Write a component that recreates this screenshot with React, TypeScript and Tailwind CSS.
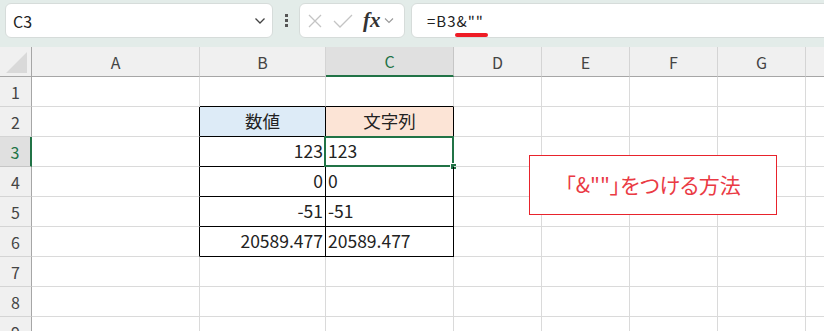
import React from 'react';

const COLS = ['A', 'B', 'C', 'D', 'E', 'F', 'G', 'H'];
const ROWS = [1, 2, 3, 4, 5, 6, 7, 8, 9];

type Cell = { text: string; align?: 'left' | 'right' | 'center'; bg?: string };

const DATA: Record<string, Cell> = {
    B2: { text: '数値', align: 'center', bg: 'bg-[#ddebf7]' },
    C2: { text: '文字列', align: 'center', bg: 'bg-[#fce4d6]' },
    B3: { text: '123', align: 'right' },
    C3: { text: '123' },
    B4: { text: '0', align: 'right' },
    C4: { text: '0' },
    B5: { text: '-51', align: 'right' },
    C5: { text: '-51' },
    B6: { text: '20589.477', align: 'right' },
    C6: { text: '20589.477' },
};

const inTable = (c: string, r: number) => (c === 'B' || c === 'C') && r >= 2 && r <= 6;

const App: React.FC = () => {
    return (
        <div
            className="w-[824px] h-[331px] overflow-hidden bg-white text-[#222]"
            style={{ fontFamily: '"Noto Sans CJK JP", "Liberation Sans", sans-serif' }}
        >
            {/* 数式バー */}
            <div className="h-[47px] bg-[#e3ece9] flex items-start pt-[3px] pl-[5px] overflow-hidden">
                <div className="shrink-0 w-[268px] h-[35px] bg-white rounded-[6px] border border-[#d6dcda] flex items-center justify-between pl-[7px] pr-[6px]">
                    <span className="text-[16px] text-[#222]">C3</span>
                    <svg width="12" height="8" viewBox="0 0 12 8">
                        <path d="M1.5 1.5 L6 6 L10.5 1.5" fill="none" stroke="#444" strokeWidth="1.3" />
                    </svg>
                </div>
                <div className="shrink-0 w-[26px] h-[35px] flex flex-col items-center justify-center gap-[2px]">
                    <span className="w-[3px] h-[3px] bg-[#555]" />
                    <span className="w-[3px] h-[3px] bg-[#555]" />
                    <span className="w-[3px] h-[3px] bg-[#555]" />
                </div>
                <div className="shrink-0 w-[106px] h-[35px] bg-white rounded-[6px] border border-[#d6dcda] flex items-center pl-[7px] gap-[10px]">
                    <svg width="16" height="16" viewBox="0 0 16 16">
                        <path d="M2 2 L14 14 M14 2 L2 14" stroke="#c4c4c4" strokeWidth="1.3" />
                    </svg>
                    <svg width="20" height="16" viewBox="0 0 20 16">
                        <path d="M1 8 L7 14 L19 2" fill="none" stroke="#c4c4c4" strokeWidth="1.3" />
                    </svg>
                    <div className="flex items-center gap-[3px]">
                        <span
                            className="text-[21px] italic font-bold text-[#333] leading-none"
                            style={{ fontFamily: '"Liberation Serif", serif' }}
                        >
                            fx
                        </span>
                        <svg width="10" height="7" viewBox="0 0 10 7">
                            <path d="M1 1.5 L5 5.5 L9 1.5" fill="none" stroke="#999" strokeWidth="1.1" />
                        </svg>
                    </div>
                </div>
                <div className="shrink-0 ml-[6px] w-[430px] h-[35px] bg-white rounded-[6px] border border-[#d6dcda] pl-[15px] relative">
                    <span className="text-[15px] leading-[34px] text-[#222] tracking-[1px]">=B3&amp;""</span>
                    <span className="absolute left-[43px] top-[29px] w-[33px] h-[4px] rounded-full bg-[#ee1c25]" />
                </div>
            </div>

            {/* シート */}
            <div className="relative">
                <div className="grid grid-cols-[32px_168px_126px_128px_88px_88px_88px_88px_88px] grid-rows-[30px_30px_30px_30px_30px_30px_30px_30px_30px_30px]">
                    {/* 列見出し */}
                    <div className="bg-[#f0f0f0] border-r border-b border-[#a6a6a6] relative">
                        <svg className="absolute left-[6px] top-[5px]" width="21" height="21" viewBox="0 0 21 21">
                            <path d="M21 0 L21 21 L0 21 Z" fill="#d9d9d9" />
                        </svg>
                    </div>
                    {COLS.map((c) => (
                        <div
                            key={c}
                            className={
                                c === 'C'
                                    ? 'bg-[#e0e0e0] border-r border-[#c6c6c6] border-b-2 border-b-[#217346] flex items-center justify-center text-[16px] text-[#217346]'
                                    : 'bg-[#f0f0f0] border-r border-[#d4d4d4] border-b border-b-[#a6a6a6] flex items-center justify-center text-[16px] text-[#444]'
                            }
                        >
                            {c === 'H' ? '' : c}
                        </div>
                    ))}

                    {ROWS.map((r) => (
                        <React.Fragment key={r}>
                            <div
                                className={
                                    r === 3
                                        ? 'bg-[#e0e0e0] border-r-2 border-r-[#217346] border-b border-[#c6c6c6] flex items-center justify-center text-[16px] text-[#217346]'
                                        : 'bg-[#f0f0f0] border-r border-r-[#a6a6a6] border-b border-[#d4d4d4] flex items-center justify-center text-[16px] text-[#444]'
                                }
                            >
                                {r}
                            </div>
                            {COLS.map((c) => {
                                const key = `${c}${r}`;
                                const cell = DATA[key];
                                const table = inTable(c, r);
                                const rightBlack = table || (c === 'A' && r >= 2 && r <= 6);
                                const bottomBlack = table || (r === 1 && (c === 'B' || c === 'C'));
                                return (
                                    <div
                                        key={key}
                                        className={[
                                            'border-r border-b flex items-center px-[2px] text-[17.5px] text-[#222] relative',
                                            rightBlack ? 'border-r-black' : 'border-r-[#dadada]',
                                            bottomBlack ? 'border-b-black' : 'border-b-[#dadada]',
                                            cell?.bg ?? '',
                                            cell?.align === 'right'
                                                ? 'justify-end'
                                                : cell?.align === 'center'
                                                ? 'justify-center'
                                                : 'justify-start',
                                        ].join(' ')}
                                    >
                                        {cell?.text}
                                        {key === 'C3' && (
                                            <>
                                                <span className="absolute -left-[2px] -top-[1px] -right-[1px] -bottom-[1px] border-2 border-[#217346] pointer-events-none" />
                                                <span className="absolute -right-[3px] -bottom-[3px] w-[5px] h-[5px] bg-[#217346] outline outline-1 outline-white" />
                                            </>
                                        )}
                                    </div>
                                );
                            })}
                        </React.Fragment>
                    ))}
                </div>

                {/* 吹き出し */}
                <div className="absolute left-[529px] top-[108px] w-[248px] h-[60px] bg-white border border-[#e8232c] flex items-center justify-center">
                    <span className="text-[21px] text-[#ea3a44] [font-feature-settings:'palt']">「&amp;""」をつける方法</span>
                </div>
            </div>
        </div>
    );
};

export default App;
